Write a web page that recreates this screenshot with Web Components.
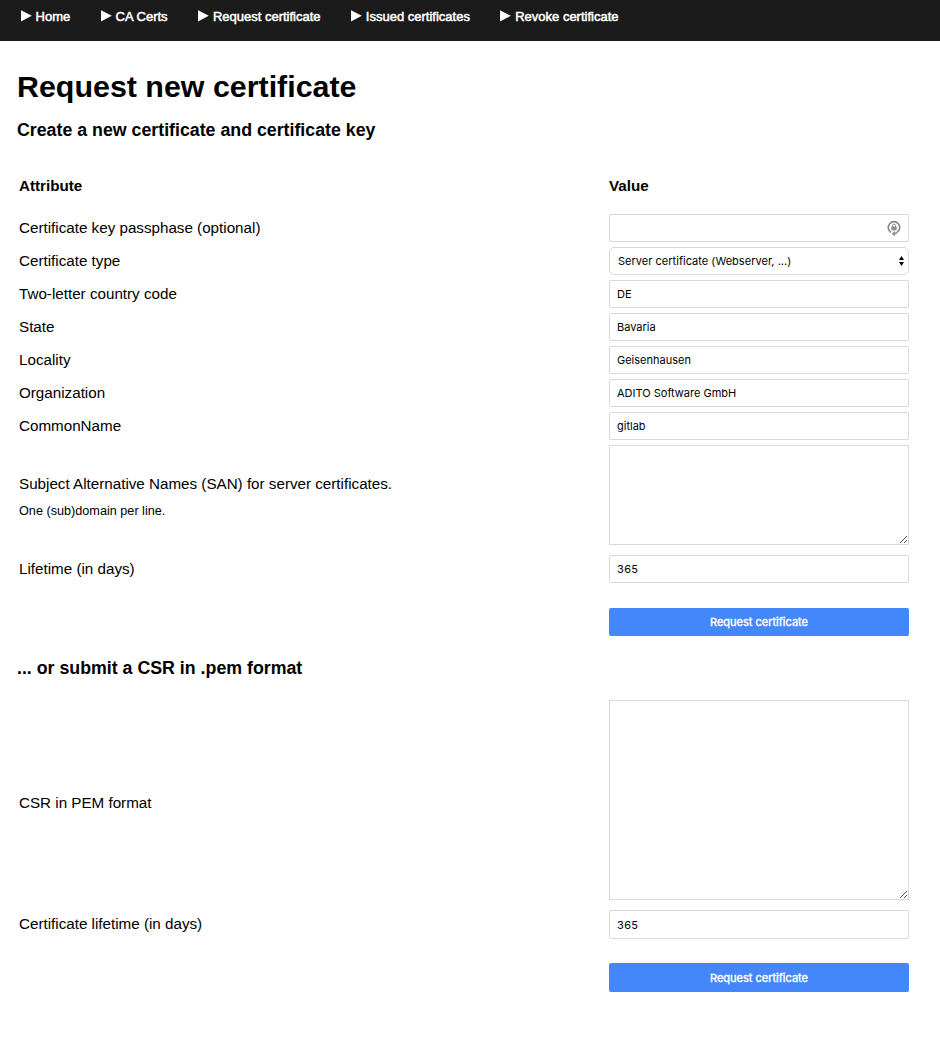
<!DOCTYPE html>
<html lang="en">
<head>
<meta charset="utf-8">
<title>Request new certificate</title>
<style>
body{margin:0;background:#fff;color:#000;font:15.2px/20px "Liberation Sans",Arial,sans-serif}
</style>
</head>
<body>
<ca-page></ca-page>
<script>
const define = (name, html) => customElements.define(name, class extends HTMLElement {
  connectedCallback() {
    if (this.shadowRoot) return;
    this.attachShadow({ mode: 'open' }).innerHTML = html;
  }
});

define('nav-link', `<style>
:host{display:flex;align-items:center;height:18px;font-size:13px;line-height:18px;color:#fff;white-space:nowrap}
svg{width:11px;height:12px;margin-right:4px;flex:none}
a{-webkit-text-stroke:.5px #fff;padding-top:1px}
</style><svg viewBox="0 0 11 12"><path d="M0 .2L10.8 5.8L0 11.4Z" fill="#fff"/></svg><a><slot></slot></a>`);

define('nav-bar', `<style>
:host{display:block;background:#1b1b1b;height:41px;box-sizing:border-box;padding:7px 0 0 20.6px}
nav{display:flex;gap:30.3px}
</style><nav><slot></slot></nav>`);

define('text-field', `<style>
:host{display:flex;align-items:center;box-sizing:border-box;width:300px;height:var(--h,28px);border:1px solid #d9d9d9;border-radius:2px;padding:0 7px;background:#fff;font:11px/14px Inter,sans-serif;letter-spacing:var(--ls,0);white-space:nowrap}
</style><slot></slot>`);

define('password-field', `<style>
:host{display:block}
text-field{justify-content:flex-end}
svg{display:block;width:14px;height:17px}
</style><text-field><svg viewBox="0 0 14 17" fill="none"><path d="M4 12.4A5.7 5.8 0 1 1 10 12.4" stroke="#8a8a8a" stroke-width="1.7"/><path d="M5.5 7V5.6a1.5 1.5 0 0 1 3 0V7" stroke="#8f8f8f" stroke-width="1"/><path d="M4.3 6.5h5.4v3.9h-5.4z" fill="#8f8f8f"/><path d="M10 12.7L7.5 13.7" stroke="#8a8a8a" stroke-width="1.7"/><path d="M7.8 11.1v5.4L4.8 13.7z" fill="#8a8a8a"/></svg></text-field>`);

define('select-field', `<style>
:host{display:flex;align-items:center;justify-content:space-between;box-sizing:border-box;width:300px;height:28px;border:1px solid #d9d9d9;border-radius:5px;padding:0 4px 0 8px;background:#fff;font:11px/14px Inter,sans-serif;letter-spacing:.02px}
svg{width:5px;height:10px}
</style><span><slot></slot></span><svg viewBox="0 0 5 10"><path d="M0 4L2.5 0L5 4ZM0 6L2.5 10L5 6Z" fill="#000"/></svg>`);

define('text-area', `<style>
:host{display:flex;align-items:flex-end;justify-content:flex-end;box-sizing:border-box;width:300px;height:var(--h,100px);border:1px solid #d9d9d9;background:#fff;padding:1px}
svg{width:8px;height:8px;margin-right:-1px}
</style><svg viewBox="0 0 8 8" shape-rendering="crispEdges"><path d="M0 7h1v1H0zM1 6h1v1H1zM2 5h1v1H2zM3 4h1v1H3zM4 3h1v1H4zM5 2h1v1H5zM6 1h1v1H6zM4 7h1v1H4zM5 6h1v1H5zM6 5h1v1H6z" fill="#555"/></svg>`);

define('submit-button', `<style>
:host{display:flex;align-items:center;justify-content:center;width:300px;height:var(--h,28px);border-radius:2px;background:#4387fb;color:#fff;font:11px/14px Inter,sans-serif;-webkit-text-stroke:.4px #fff}
</style><slot></slot>`);

define('form-row', `<style>
:host{display:grid;grid-template-columns:590px 300px;align-items:center;padding-left:19px;margin-bottom:5px}
</style><div><slot name="label"></slot></div><slot></slot>`);

define('ca-page', `<style>
:host{display:block}
h1{margin:27px 0 0 17px;font-size:30.4px;line-height:36px}
h2{margin:15px 0 0 17px;font-size:17.78px;line-height:22px}
h2.csr{margin:21px 0 21px 17px}
.head{font-weight:bold;margin:35px 0 18px}
small{display:block;font-size:12.66px;line-height:20px;margin-top:7px}
.san{margin-bottom:10px}
.san [slot]{padding-top:4px}
.go{margin:25px 0 0}
.last{margin:24px 0 0}
.life [slot]{display:block;padding-bottom:2px}
</style>
<nav-bar><nav-link>Home</nav-link><nav-link>CA Certs</nav-link><nav-link>Request certificate</nav-link><nav-link>Issued certificates</nav-link><nav-link>Revoke certificate</nav-link></nav-bar>
<main>
<h1>Request new certificate</h1>
<h2>Create a new certificate and certificate key</h2>
<form-row class="head"><span slot="label">Attribute</span><span>Value</span></form-row>
<form-row><span slot="label">Certificate key passphase (optional)</span><password-field></password-field></form-row>
<form-row><span slot="label">Certificate type</span><select-field>Server certificate (Webserver, ...)</select-field></form-row>
<form-row><span slot="label">Two-letter country code</span><text-field>DE</text-field></form-row>
<form-row><span slot="label">State</span><text-field>Bavaria</text-field></form-row>
<form-row><span slot="label">Locality</span><text-field>Geisenhausen</text-field></form-row>
<form-row><span slot="label">Organization</span><text-field>ADITO Software GmbH</text-field></form-row>
<form-row><span slot="label">CommonName</span><text-field>gitlab</text-field></form-row>
<form-row class="san"><div slot="label">Subject Alternative Names (SAN) for server certificates.<small>One (sub)domain per line.</small></div><text-area></text-area></form-row>
<form-row style="margin-bottom:0"><span slot="label">Lifetime (in days)</span><text-field style="--ls:.35px">365</text-field></form-row>
<form-row class="go"><submit-button>Request certificate</submit-button></form-row>
<h2 class="csr">... or submit a CSR in .pem format</h2>
<form-row style="margin-bottom:10px"><div slot="label" style="padding-top:5px">CSR in PEM format</div><text-area style="--h:200px"></text-area></form-row>
<form-row class="life" style="margin-bottom:0"><span slot="label">Certificate lifetime (in days)</span><text-field style="--h:29px;--ls:.35px">365</text-field></form-row>
<form-row class="last"><submit-button style="--h:29px">Request certificate</submit-button></form-row>
</main>`);
</script>
</body>
</html>
